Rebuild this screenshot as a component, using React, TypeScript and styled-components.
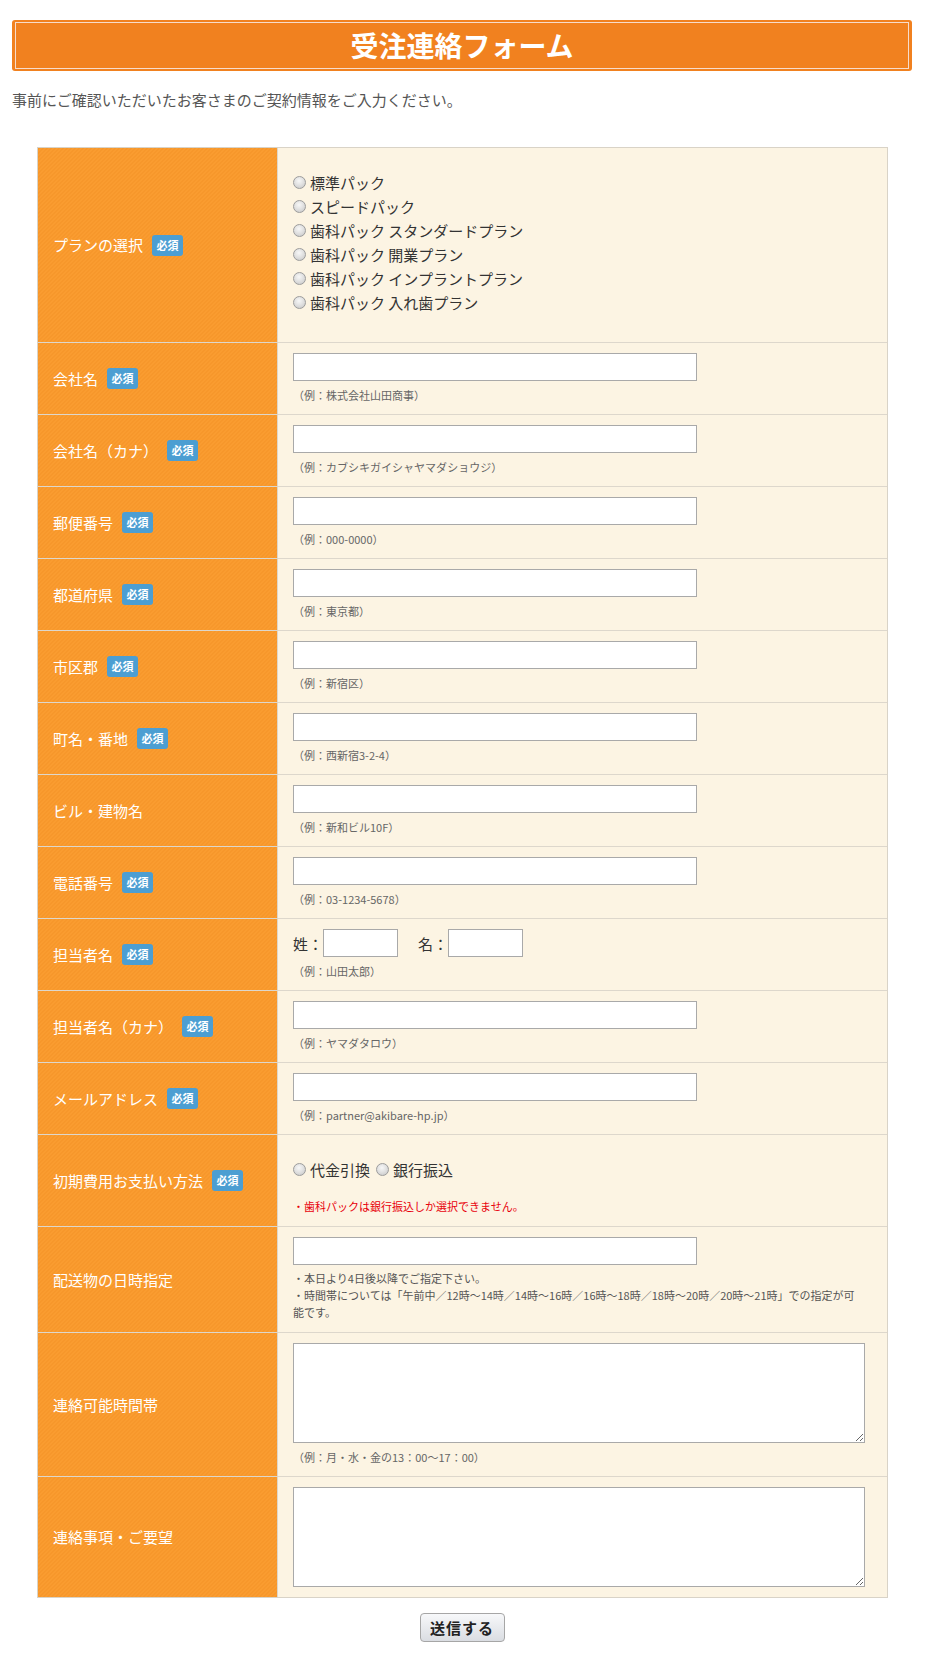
import React from "react";
import styled, { createGlobalStyle } from "styled-components";

const GlobalStyle = createGlobalStyle`
  html, body {
    margin: 0;
    padding: 0;
    background: #ffffff;
  }
  body {
    font-family: "Noto Sans CJK JP", "Noto Sans", sans-serif;
    color: #333;
  }
  * { box-sizing: border-box; }
`;

const Page = styled.div`
  width: 900px;
  margin-left: 12px;
  padding: 20px 0 26px;
`;

const TitleFrame = styled.div`
  background: #f1811f;
  border-radius: 3px;
  padding: 2px 3px;
`;

const Title = styled.h1`
  margin: 0;
  border: 1px solid #f7dccb;
  background: #f1811f;
  height: 47px;
  line-height: 45px;
  text-align: center;
  color: #ffffff;
  font-size: 28px;
  font-weight: 700;
`;

const Lead = styled.p`
  margin: 17px 0 0;
  font-size: 15px;
  line-height: 24px;
  color: #555;
`;

const FormTable = styled.div`
  width: 851px;
  margin: 35px 0 0 25px;
  border: 1px solid #d9d3c7;
`;

const Row = styled.div`
  display: grid;
  grid-template-columns: 240px 1fr;
  & + & {
    border-top: 1px solid #ddd7cc;
  }
`;

const LabelCell = styled.div`
  display: flex;
  align-items: center;
  padding: 0 15px;
  border-right: 1px solid #ddd7cc;
  background-color: #fa9c30;
  background-image: linear-gradient(
    135deg,
    rgba(215, 110, 0, 0.1) 25%,
    transparent 25%,
    transparent 50%,
    rgba(215, 110, 0, 0.1) 50%,
    rgba(215, 110, 0, 0.1) 75%,
    transparent 75%,
    transparent
  );
  background-size: 4px 4px;
  color: #ffffff;
  font-size: 15px;
  line-height: 22px;
`;

const Required = styled.span`
  display: inline-block;
  margin-left: 9px;
  width: 31px;
  height: 21px;
  line-height: 21px;
  text-align: center;
  border-radius: 3px;
  background: #4c9ed2;
  color: #ffffff;
  font-size: 11px;
  font-weight: 700;
`;

const ValueCell = styled.div<{ $pt?: number; $pb?: number }>`
  background: #fcf4e3;
  padding: ${(p) => p.$pt ?? 10}px 15px ${(p) => p.$pb ?? 10}px;
`;

const TextInput = styled.input`
  display: block;
  width: 404px;
  height: 28px;
  border: 1px solid #a9a9a9;
  background: #ffffff;
  margin: 0;
  padding: 2px 4px;
  font-size: 14px;
`;

const SmallInput = styled(TextInput)`
  display: inline-block;
  width: 75px;
  vertical-align: middle;
`;

const TextArea = styled.textarea`
  display: block;
  width: 572px;
  height: 100px;
  border: 1px solid #a9a9a9;
  background: #ffffff;
  margin: 0;
  padding: 2px 4px;
  font-size: 14px;
`;

const Example = styled.div`
  margin-top: 6px;
  font-size: 11px;
  line-height: 17px;
  color: #666;
`;

const Notes = styled.div`
  margin-top: 5px;
  font-size: 11px;
  line-height: 17px;
  color: #555;
`;

const Alert = styled.div`
  margin-top: 17px;
  font-size: 11px;
  line-height: 17px;
  color: #e8000b;
`;

const RadioList = styled.div`
  display: flex;
  flex-direction: column;
  align-items: flex-start;
`;

const RadioRow = styled.div`
  display: flex;
  align-items: center;
  gap: 6px;
`;

const RadioLabel = styled.label`
  display: flex;
  align-items: center;
  height: 24px;
  font-size: 15px;
  color: #333;
`;

const Radio = styled.input.attrs({ type: "radio" })`
  appearance: none;
  -webkit-appearance: none;
  width: 13px;
  height: 13px;
  margin: 0 4px 0 0;
  border-radius: 50%;
  border: 1px solid #9c9c9c;
  background: radial-gradient(circle at 45% 35%, #f7f7f7 0%, #e2e2e2 45%, #c4c4c4 100%);
  flex: none;
`;

const NameLine = styled.div`
  display: flex;
  align-items: center;
  gap: 20px;
  height: 28px;
  font-size: 15px;
  color: #333;
`;

const NamePart = styled.span`
  display: inline-flex;
  align-items: center;
`;

const ButtonBar = styled.div`
  display: flex;
  justify-content: center;
  margin-top: 15px;
`;

const SubmitButton = styled.button`
  width: 85px;
  height: 29px;
  padding: 0;
  border: 1px solid #a6a6a6;
  border-radius: 4px;
  background: linear-gradient(#f7f8fa, #dadde2);
  color: #222;
  font-family: "Noto Sans CJK JP", sans-serif;
  font-size: 15px;
  font-weight: 700;
  letter-spacing: 1px;
`;

type Field = { label: string; required: boolean; example: string };

const fields: Field[] = [
  { label: "会社名", required: true, example: "（例：株式会社山田商事）" },
  { label: "会社名（カナ）", required: true, example: "（例：カブシキガイシャヤマダショウジ）" },
  { label: "郵便番号", required: true, example: "（例：000-0000）" },
  { label: "都道府県", required: true, example: "（例：東京都）" },
  { label: "市区郡", required: true, example: "（例：新宿区）" },
  { label: "町名・番地", required: true, example: "（例：西新宿3-2-4）" },
  { label: "ビル・建物名", required: false, example: "（例：新和ビル10F）" },
  { label: "電話番号", required: true, example: "（例：03-1234-5678）" },
];

const plans = [
  "標準パック",
  "スピードパック",
  "歯科パック スタンダードプラン",
  "歯科パック 開業プラン",
  "歯科パック インプラントプラン",
  "歯科パック 入れ歯プラン",
];

const Label: React.FC<{ text: string; required?: boolean }> = ({ text, required }) => (
  <LabelCell>
    <span>{text}</span>
    {required && <Required>必須</Required>}
  </LabelCell>
);

export default function App() {
  return (
    <>
      <GlobalStyle />
      <Page>
        <TitleFrame>
          <Title>受注連絡フォーム</Title>
        </TitleFrame>
        <Lead>事前にご確認いただいたお客さまのご契約情報をご入力ください。</Lead>

        <FormTable>
          <Row>
            <Label text="プランの選択" required />
            <ValueCell $pt={22} $pb={28}>
              <RadioList>
                {plans.map((p) => (
                  <RadioLabel key={p}>
                    <Radio name="plan" />
                    {p}
                  </RadioLabel>
                ))}
              </RadioList>
            </ValueCell>
          </Row>

          {fields.map((f) => (
            <Row key={f.label}>
              <Label text={f.label} required={f.required} />
              <ValueCell>
                <TextInput type="text" />
                <Example>{f.example}</Example>
              </ValueCell>
            </Row>
          ))}

          <Row>
            <Label text="担当者名" required />
            <ValueCell>
              <NameLine>
                <NamePart>
                  姓：<SmallInput type="text" />
                </NamePart>
                <NamePart>
                  名：<SmallInput type="text" />
                </NamePart>
              </NameLine>
              <Example>（例：山田太郎）</Example>
            </ValueCell>
          </Row>

          <Row>
            <Label text="担当者名（カナ）" required />
            <ValueCell>
              <TextInput type="text" />
              <Example>（例：ヤマダタロウ）</Example>
            </ValueCell>
          </Row>

          <Row>
            <Label text="メールアドレス" required />
            <ValueCell>
              <TextInput type="text" />
              <Example>（例：partner@akibare-hp.jp）</Example>
            </ValueCell>
          </Row>

          <Row>
            <Label text="初期費用お支払い方法" required />
            <ValueCell $pt={22} $pb={11}>
              <RadioRow>
                <RadioLabel>
                  <Radio name="pay" />
                  代金引換
                </RadioLabel>
                <RadioLabel>
                  <Radio name="pay" />
                  銀行振込
                </RadioLabel>
              </RadioRow>
              <Alert>・歯科パックは銀行振込しか選択できません。</Alert>
            </ValueCell>
          </Row>

          <Row>
            <Label text="配送物の日時指定" />
            <ValueCell $pb={11}>
              <TextInput type="text" />
              <Notes>
                ・本日より4日後以降でご指定下さい。
                <br />
                ・時間帯については「午前中／12時～14時／14時～16時／16時～18時／18時～20時／20時～21時」での指定が可
                <br />
                能です。
              </Notes>
            </ValueCell>
          </Row>

          <Row>
            <Label text="連絡可能時間帯" />
            <ValueCell>
              <TextArea />
              <Example>（例：月・水・金の13：00～17：00）</Example>
            </ValueCell>
          </Row>

          <Row>
            <Label text="連絡事項・ご要望" />
            <ValueCell>
              <TextArea />
            </ValueCell>
          </Row>
        </FormTable>

        <ButtonBar>
          <SubmitButton type="submit">送信する</SubmitButton>
        </ButtonBar>
      </Page>
    </>
  );
}
